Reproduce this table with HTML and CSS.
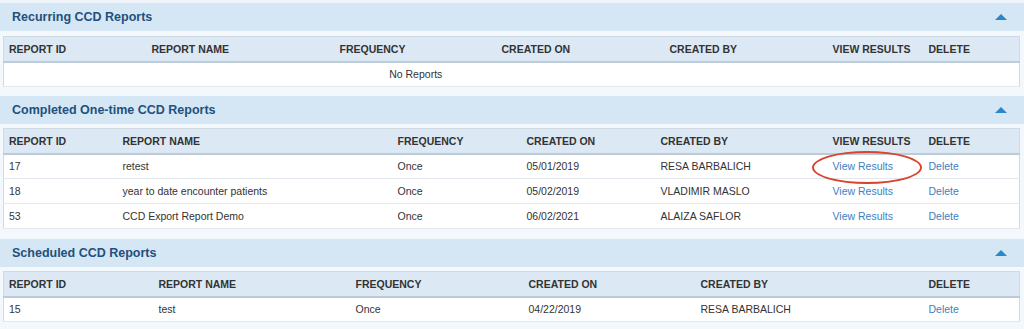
FILE: index.html
```html
<!DOCTYPE html>
<html>
<head>
<meta charset="utf-8">
<link rel="stylesheet" href="styles.css">
</head>
<body>
<div class="panel">
  <section class="sect">
    <div class="sect-head"><h2>Recurring CCD Reports</h2><span class="caret"></span></div>
    <div class="sect-body first">
      <table class="grid t1">
        <colgroup><col class="c1"><col class="c2"><col class="c3"><col class="c4"><col class="c5"><col class="c6"><col class="c7"></colgroup>
        <thead><tr><th>REPORT ID</th><th>REPORT NAME</th><th>FREQUENCY</th><th>CREATED ON</th><th>CREATED BY</th><th>VIEW RESULTS</th><th>DELETE</th></tr></thead>
        <tbody><tr><td colspan="5" class="empty">No Reports</td><td></td><td></td></tr></tbody>
      </table>
    </div>
  </section>

  <section class="sect">
    <div class="sect-head"><h2>Completed One-time CCD Reports</h2><span class="caret"></span></div>
    <div class="sect-body">
      <table class="grid t2">
        <colgroup><col class="c1"><col class="c2"><col class="c3"><col class="c4"><col class="c5"><col class="c6"><col class="c7"></colgroup>
        <thead><tr><th>REPORT ID</th><th>REPORT NAME</th><th>FREQUENCY</th><th>CREATED ON</th><th>CREATED BY</th><th>VIEW RESULTS</th><th>DELETE</th></tr></thead>
        <tbody>
          <tr><td>17</td><td>retest</td><td>Once</td><td>05/01/2019</td><td>RESA BARBALICH</td><td class="circled"><a href="#">View Results</a><span class="ring"></span></td><td><a href="#">Delete</a></td></tr>
          <tr><td>18</td><td>year to date encounter patients</td><td>Once</td><td>05/02/2019</td><td>VLADIMIR MASLO</td><td><a href="#">View Results</a></td><td><a href="#">Delete</a></td></tr>
          <tr><td>53</td><td>CCD Export Report Demo</td><td>Once</td><td>06/02/2021</td><td>ALAIZA SAFLOR</td><td><a href="#">View Results</a></td><td><a href="#">Delete</a></td></tr>
        </tbody>
      </table>
    </div>
  </section>

  <section class="sect">
    <div class="sect-head"><h2>Scheduled CCD Reports</h2><span class="caret"></span></div>
    <div class="sect-body">
      <table class="grid t3">
        <colgroup><col class="c1"><col class="c2"><col class="c3"><col class="c4"><col class="c5"><col class="c7"></colgroup>
        <thead><tr><th>REPORT ID</th><th>REPORT NAME</th><th>FREQUENCY</th><th>CREATED ON</th><th>CREATED BY</th><th>DELETE</th></tr></thead>
        <tbody>
          <tr><td>15</td><td>test</td><td>Once</td><td>04/22/2019</td><td>RESA BARBALICH</td><td><a href="#">Delete</a></td></tr>
        </tbody>
      </table>
    </div>
  </section>
</div>
</body>
</html>
```

FILE: styles.css
```css
* { box-sizing: border-box; }
html, body { margin: 0; padding: 0; background: #f1f6fa; }
body { font-family: "Liberation Sans", Arial, Helvetica, sans-serif; color: #333; }

.panel { padding-top: 3px; background: #eef4f9; height: 329px; overflow: hidden; }

.sect-head {
  height: 28px;
  background: #d5e7f4;
  display: flex;
  align-items: center;
  justify-content: space-between;
  padding: 0 17px 0 12px;
}
.sect-head h2 {
  margin: 0;
  font-size: 12.5px;
  font-weight: bold;
  color: #23507d;
}
.caret {
  width: 0; height: 0;
  border-left: 6px solid transparent;
  border-right: 6px solid transparent;
  border-bottom: 6px solid #2a88c9;
}

.sect-body { padding: 4px 5px 10px 3px; background: #f3f8fc; }
.sect-body.first { padding-top: 5px; padding-bottom: 9px; }

.grid {
  width: 1016px;
  table-layout: fixed;
  border-collapse: collapse;
  background: #fff;
  border: 1px solid #cfdae3;
  font-size: 10.5px;
}
.grid th {
  height: 25px;
  padding: 0 0 0 5px;
  text-align: left;
  font-weight: bold;
  color: #333;
  background: #dce9f4;
  border-bottom: 2px solid #bccbd8;
}
.grid td {
  height: 25px;
  padding: 0 0 0 5px;
  color: #333;
  border-bottom: 1px solid #e2e8ed;
}
.grid td.empty { text-align: center; padding: 0; }
.grid a { color: #3d80bf; text-decoration: none; }

.t1 .c1 { width: 143px; } .t1 .c2 { width: 188px; } .t1 .c3 { width: 162px; }
.t1 .c4 { width: 168px; } .t1 .c5 { width: 163px; } .t1 .c6 { width: 96px; } .t1 .c7 { width: 96px; }

.t2 .c1 { width: 114px; } .t2 .c2 { width: 275px; } .t2 .c3 { width: 129px; }
.t2 .c4 { width: 134px; } .t2 .c5 { width: 172px; } .t2 .c6 { width: 96px; } .t2 .c7 { width: 96px; }

.t3 .c1 { width: 150px; } .t3 .c2 { width: 197px; } .t3 .c3 { width: 173px; }
.t3 .c4 { width: 172px; } .t3 .c5 { width: 228px; } .t3 .c7 { width: 96px; }

.circled { position: relative; }
.ring {
  position: absolute;
  left: -16px;
  top: -4px;
  width: 110px;
  height: 33px;
  border: 2px solid #d8452f;
  border-radius: 50%;
  pointer-events: none;
}
```
